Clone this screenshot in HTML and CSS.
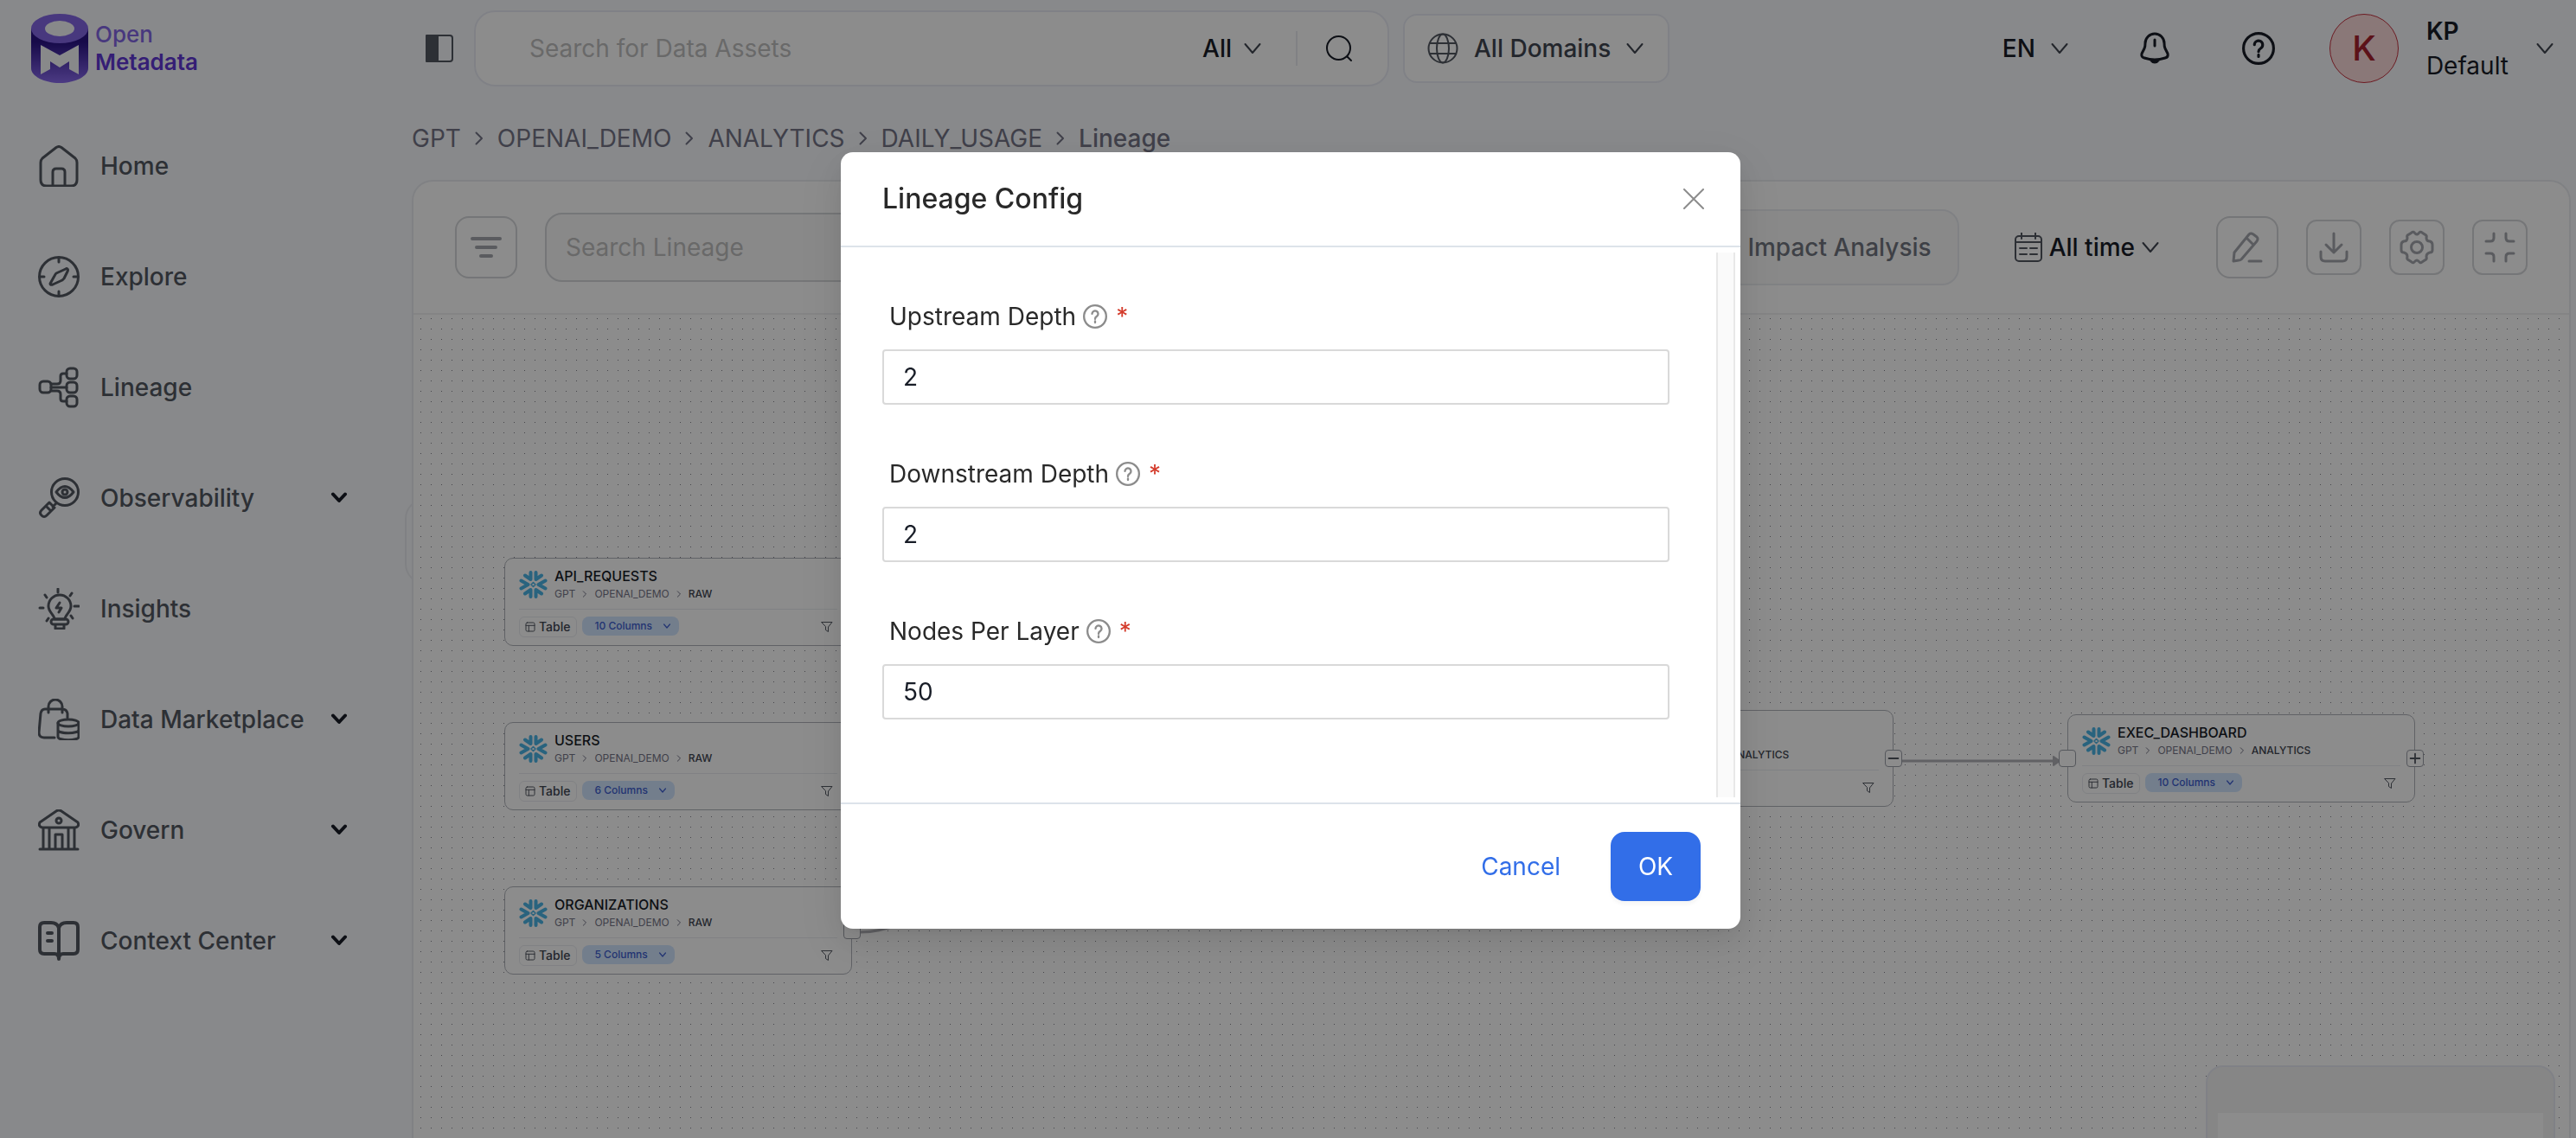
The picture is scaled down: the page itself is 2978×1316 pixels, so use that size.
FILE: index.html
```html
<!DOCTYPE html>
<html lang="en">
<head>
    <meta charset="UTF-8">
    <meta name="viewport" content="width=device-width, initial-scale=1.0">
    <title>Lineage - OpenMetadata</title>
    <link rel="stylesheet" href="styles.css">
</head>
<body>
    <!-- Shared icons -->
    <svg class="sprite" aria-hidden="true">
        <symbol id="chevron" viewBox="0 0 20 20"><path d="M1.500 5l8.500 10 8.500-10"/></symbol>
        <symbol id="chevron-bold" viewBox="0 0 20 14"><path d="M3 2.500l7 7.500L17 2.500"/></symbol>
        <symbol id="chevron-right" viewBox="0 0 10 16"><path d="M1.500 1.500L8 8l-6.500 6.500"/></symbol>
        <symbol id="question" viewBox="0 0 36 36"><circle cx="18" cy="18" r="16.500"/><path d="M13.500 14a4.500 4.500 0 1 1 7 3.800c-1.500 1-2.500 1.800-2.500 3.700M18 25v2"/></symbol>
        <symbol id="snowflake" viewBox="0 0 32 32">
            <path d="M13 2v8L6.500 5.500M19 2v8l6.500-4.500M13 30v-8l-6.500 4.500M19 30v-8l6.500 4.500M2 11.500l8 4.500-8 4.500M30 11.500L22 16l8 4.500"/>
            <path d="M16 13.500l2.500 2.500-2.500 2.500-2.500-2.500z" stroke-width="1.500"/>
        </symbol>
        <symbol id="table" viewBox="0 0 12 12"><rect x="1" y="1" width="10" height="10" rx="1.500"/><path d="M1 4.300h10M4.300 4.300V11"/></symbol>
        <symbol id="funnel" viewBox="0 0 14 14"><path d="M1 1.500h12L8.500 7v5.500l-3-2V7z"/></symbol>
    </svg>

    <div class="app">
        <!-- Sidebar -->
        <aside class="sidebar">
            <a class="logo" href="#">
                <svg width="66" height="80" viewBox="0 0 66 80">
                    <defs>
                        <linearGradient id="drum" x1="0" y1="0" x2="0" y2="1">
                            <stop offset="0.250" stop-color="#2a1386"/>
                            <stop offset="1" stop-color="#8b6bf0"/>
                        </linearGradient>
                    </defs>
                    <path d="M0 17v46c0 9 15 17 33 17s33-8 33-17V17z" fill="url(#drum)"/>
                    <ellipse cx="33" cy="17" rx="33" ry="17" fill="#8467e6"/>
                    <ellipse cx="33" cy="17" rx="17" ry="9" fill="#f8fafc"/>
                    <path d="M11 36l22 12 22-12v34l-11-6V55l-11 7-11-7v9l-11 6z" fill="#f8fafc"/>
                </svg>
                <span class="logo-text"><span>Open</span><strong>Metadata</strong></span>
            </a>
            <nav class="menu">
                <a href="#">
                    <svg viewBox="0 0 48 48"><path d="M3 20q0-3 2-5L21 2.500q3-2 6 0L43 15q2 2 2 5v20q0 7-7 7H10q-7 0-7-7zM17 47V31q0-4 4-4h6q4 0 4 4v16"/></svg>
                    <span>Home</span>
                </a>
                <a href="#">
                    <svg viewBox="0 0 48 48"><circle cx="24" cy="24" r="22.500"/><path d="M24 2v5M24 41v5M2 24h5M41 24h5M34 15q1 1 0 3l-4 8q-1 1-2 2l-11 5q-3 1-3-1l5-9q1-2 2-3l11-5q1-1 2 0z"/></svg>
                    <span>Explore</span>
                </a>
                <a href="#">
                    <svg viewBox="0 0 48 48"><rect x="2" y="17" width="13" height="13" rx="4"/><rect x="33" y="2" width="12" height="12" rx="4"/><rect x="33" y="18" width="12" height="12" rx="4"/><rect x="33" y="34" width="12" height="12" rx="4"/><path d="M15 20h7q4 0 4-4v-5q0-3 3-3h4M15 24h18M15 28h7q4 0 4 4v5q0 3 3 3h4"/></svg>
                    <span>Lineage</span>
                </a>
                <a href="#">
                    <svg viewBox="0 0 48 48"><circle cx="31" cy="17" r="15.500"/><path d="M21 17q10-13 20 0-10 13-20 0z"/><circle cx="31" cy="17" r="3"/><path d="M21 30l-4 4M13 29l6 6-9 9q-3 3-6 0t0-6zM9 33l6 6"/></svg>
                    <span>Observability</span>
                    <svg class="caret"><use href="#chevron-bold"/></svg>
                </a>
                <a href="#">
                    <svg viewBox="0 0 48 48"><path d="M19 36c0-5-7-8-7-15a13 13 0 0 1 26 0c0 7-7 10-7 15zM25 17l-4 6h6l-3 5"/><rect x="15" y="36" width="20" height="6" rx="3"/><path d="M20 43v4h10v-4M23 1v4M8 8l2 3M39 6l-2 3M2 23h4M42 21h5M10 38l2-3M40 35l-2-3"/></svg>
                    <span>Insights</span>
                </a>
                <a href="#">
                    <svg viewBox="0 0 48 48"><path d="M19 45H7q-6 0-6-6l2-22q1-5 5-5h20q5 0 6 5v5M12 16V9a8 8 0 0 1 16 0v7"/><ellipse cx="35" cy="28" rx="12" ry="4"/><path d="M23 28v16c0 5 24 5 24 0V28M23 36c0 5 24 5 24 0"/></svg>
                    <span>Data Marketplace</span>
                    <svg class="caret"><use href="#chevron-bold"/></svg>
                </a>
                <a href="#">
                    <svg viewBox="0 0 48 48"><path d="M5 21q-5-1-3-6L21 2q3-2 6 0l19 13q2 5-3 6zM2 46h44M6 21v25M13 21v25M35 21v25M42 21v25M20 46V29h8v17"/><ellipse cx="24" cy="13" rx="3" ry="3"/></svg>
                    <span>Govern</span>
                    <svg class="caret"><use href="#chevron-bold"/></svg>
                </a>
                <a href="#">
                    <svg class="heavy" viewBox="0 0 48 48"><path d="M24 45V9q-2-6-9-6H7Q2 3 2 8v26q0 5 5 5h12q5 0 5 6 0-6 5-6h12q5 0 5-5V8q0-5-5-5h-8q-7 0-9 6M11 15h5M11 24h5"/></svg>
                    <span>Context Center</span>
                    <svg class="caret"><use href="#chevron-bold"/></svg>
                </a>
            </nav>
        </aside>

        <div class="content">
            <!-- Top bar -->
            <header class="topbar">
                <button class="plain toggle" type="button" aria-label="Collapse sidebar">
                    <svg width="32" height="32" viewBox="0 0 32 32"><rect x="1" y="1" width="30" height="30" rx="3"/><path d="M1 1h13v30H1z" fill="#535862"/></svg>
                </button>
                <div class="search">
                    <input type="text" placeholder="Search for Data Assets" aria-label="Search for Data Assets">
                    <button class="plain" type="button">All <svg class="arrow"><use href="#chevron"/></svg></button>
                    <button class="plain find" type="button" aria-label="Search">
                        <svg width="32" height="32" viewBox="0 0 32 32"><circle cx="15.500" cy="15.500" r="13.500"/><path d="M25.500 25.500L30 30"/></svg>
                    </button>
                </div>
                <button class="domains" type="button">
                    <svg width="36" height="36" viewBox="0 0 36 36"><circle cx="18" cy="18" r="16.500"/><ellipse cx="18" cy="18" rx="7" ry="16.500"/><path d="M3 12h30M3 24h30"/></svg>
                    All Domains
                    <svg class="arrow"><use href="#chevron"/></svg>
                </button>
                <div class="tools">
                    <button class="plain" type="button">EN <svg class="arrow"><use href="#chevron"/></svg></button>
                    <button class="plain" type="button" aria-label="Notifications">
                        <svg class="dark" width="40" height="40" viewBox="0 0 40 40"><path d="M8 31q-4-1-3-5l3-6q1-2 1-6a11 11 0 0 1 22 0q0 4 1 6l3 6q1 4-3 5-12 4-24 0zM20 10v7M15 33q5 6 10 0"/></svg>
                    </button>
                    <button class="plain" type="button" aria-label="Help">
                        <svg class="dark" width="40" height="40" viewBox="0 0 40 40"><use href="#question" x="1" y="1" width="38" height="38"/></svg>
                    </button>
                    <button class="plain user" type="button">
                        <span class="avatar">K</span>
                        <span class="user-name"><strong>KP</strong>Default</span>
                        <svg class="arrow"><use href="#chevron"/></svg>
                    </button>
                </div>
            </header>

            <nav class="breadcrumb">
                <a href="#">GPT</a>
                <svg><use href="#chevron-right"/></svg>
                <a href="#">OPENAI_DEMO</a>
                <svg><use href="#chevron-right"/></svg>
                <a href="#">ANALYTICS</a>
                <svg><use href="#chevron-right"/></svg>
                <a href="#">DAILY_USAGE</a>
                <svg><use href="#chevron-right"/></svg>
                <span>Lineage</span>
            </nav>

            <main class="lineage">
                <div class="card">
                    <div class="toolbar">
                        <button class="tool large" type="button" aria-label="Filters">
                            <svg width="36" height="28" viewBox="0 0 36 28"><path d="M2 4h32M7 14h22M12 24h12" stroke-width="4"/></svg>
                        </button>
                        <input class="lineage-search" type="text" placeholder="Search Lineage" aria-label="Search Lineage">
                        <div class="tabs">
                            <button class="active" type="button">Lineage</button>
                            <button type="button">Impact Analysis</button>
                        </div>
                        <button class="plain date" type="button">
                            <svg width="32" height="34" viewBox="0 0 32 34"><rect x="1" y="4" width="30" height="29" rx="4"/><path d="M1 11h30M8 0v7M24 0v7M6 18h8M18 18h8M6 25h8M18 25h8"/></svg>
                            All time
                            <svg class="arrow"><use href="#chevron"/></svg>
                        </button>
                        <div class="actions">
                            <button class="tool large" type="button" aria-label="Edit">
                                <svg width="36" height="36" viewBox="0 0 36 36"><path d="M2 34l1-10L20 3q2-2 5 0l4 3q2 2 0 5L11 32q-1 1-3 1zM17 7l8 8"/><path d="M20 34h14"/></svg>
                            </button>
                            <button class="tool" type="button" aria-label="Export">
                                <svg width="36" height="36" viewBox="0 0 36 36"><path d="M18 2v22M9 15l9 9 9-9M3 23v6q0 5 5 5h20q5 0 5-5v-6"/></svg>
                            </button>
                            <button class="tool" type="button" aria-label="Settings">
                                <svg width="40" height="40" viewBox="0 0 40 40"><circle cx="20" cy="20" r="6.500"/><path d="M14 3q2-2 4 1 2 2 4 0 2-3 4-1l3 2q3 1 2 4 0 4 4 4 3 1 3 4v6q0 3-3 3-4 1-4 5 1 3-2 4l-3 2q-2 2-4-1-2-2-4 0-2 3-4 1l-3-2q-3-1-2-4 0-4-4-5-3 0-3-3v-6q0-3 3-4 4 0 4-4-1-3 2-4z"/></svg>
                            </button>
                            <button class="tool" type="button" aria-label="Exit full screen">
                                <svg width="36" height="36" viewBox="0 0 36 36"><path d="M11 2v5q0 4-4 4H2M25 2v5q0 4 4 4h5M11 34v-5q0-4-4-4H2M25 34v-5q0-4 4-4h5"/></svg>
                            </button>
                        </div>
                    </div>

                    <!-- Lineage canvas -->
                    <div class="canvas">
                        <svg class="flow">
                            <defs>
                                <pattern id="dots" x="8" y="4" width="12" height="12" patternUnits="userSpaceOnUse"><rect width="1" height="1" fill="#81818a"/></pattern>
                            </defs>
                            <rect width="100%" height="100%" fill="url(#dots)"/>
                            <path class="edge" d="M516 714C640 714 700 516 860 516M516 524H860M516 334C640 334 700 516 860 516"/>
                            <path class="edge" d="M1721 516H1898"/>
                            <path class="arrow-head" d="M1896 511l7 5-7 5z"/>
                        </svg>

                        <article class="node api">
                            <header>
                                <svg class="brand"><use href="#snowflake"/></svg>
                                <div><h3>API_REQUESTS</h3><p>GPT <svg><use href="#chevron-right"/></svg> OPENAI_DEMO <svg><use href="#chevron-right"/></svg> <b>RAW</b></p></div>
                            </header>
                            <footer>
                                <span class="type"><svg><use href="#table"/></svg>Table</span>
                                <button class="columns" type="button">10 Columns <svg><use href="#chevron"/></svg></button>
                                <svg class="funnel"><use href="#funnel"/></svg>
                            </footer>
                            <i class="handle right"></i>
                        </article>

                        <article class="node users">
                            <header>
                                <svg class="brand"><use href="#snowflake"/></svg>
                                <div><h3>USERS</h3><p>GPT <svg><use href="#chevron-right"/></svg> OPENAI_DEMO <svg><use href="#chevron-right"/></svg> <b>RAW</b></p></div>
                            </header>
                            <footer>
                                <span class="type"><svg><use href="#table"/></svg>Table</span>
                                <button class="columns" type="button">6 Columns <svg><use href="#chevron"/></svg></button>
                                <svg class="funnel"><use href="#funnel"/></svg>
                            </footer>
                            <i class="handle right"></i>
                        </article>

                        <article class="node orgs">
                            <header>
                                <svg class="brand"><use href="#snowflake"/></svg>
                                <div><h3>ORGANIZATIONS</h3><p>GPT <svg><use href="#chevron-right"/></svg> OPENAI_DEMO <svg><use href="#chevron-right"/></svg> <b>RAW</b></p></div>
                            </header>
                            <footer>
                                <span class="type"><svg><use href="#table"/></svg>Table</span>
                                <button class="columns" type="button">5 Columns <svg><use href="#chevron"/></svg></button>
                                <svg class="funnel"><use href="#funnel"/></svg>
                            </footer>
                            <i class="handle right"></i>
                        </article>

                        <article class="node usage">
                            <header>
                                <svg class="brand"><use href="#snowflake"/></svg>
                                <div><h3>DAILY_USAGE</h3><p>GPT <svg><use href="#chevron-right"/></svg> OPENAI_DEMO <svg><use href="#chevron-right"/></svg> <b>ANALYTICS</b></p></div>
                            </header>
                            <footer>
                                <span class="type"><svg><use href="#table"/></svg>Table</span>
                                <svg class="funnel"><use href="#funnel"/></svg>
                            </footer>
                            <i class="handle right"><svg viewBox="0 0 20 20"><path d="M4 10h12"/></svg></i>
                        </article>

                        <article class="node exec">
                            <header>
                                <svg class="brand"><use href="#snowflake"/></svg>
                                <div><h3>EXEC_DASHBOARD</h3><p>GPT <svg><use href="#chevron-right"/></svg> OPENAI_DEMO <svg><use href="#chevron-right"/></svg> <b>ANALYTICS</b></p></div>
                            </header>
                            <footer>
                                <span class="type"><svg><use href="#table"/></svg>Table</span>
                                <button class="columns" type="button">10 Columns <svg><use href="#chevron"/></svg></button>
                                <svg class="funnel"><use href="#funnel"/></svg>
                            </footer>
                            <i class="handle left"></i>
                            <i class="handle right"><svg viewBox="0 0 20 20"><path d="M4 10h12M10 4v12"/></svg></i>
                        </article>

                        <div class="minimap"><div></div></div>
                    </div>
                </div>
            </main>
        </div>
    </div>

    <!-- Lineage config dialog -->
    <div class="overlay">
        <form class="modal" role="dialog" aria-labelledby="modalTitle">
            <div class="modal-header">
                <h2 id="modalTitle">Lineage Config</h2>
                <button class="plain" type="button" aria-label="Close">
                    <svg width="24" height="24" viewBox="0 0 24 24"><path d="M1 1l22 22M23 1L1 23"/></svg>
                </button>
            </div>
            <div class="modal-body">
                <div class="fields">
                    <div class="field">
                        <label for="upstream">Upstream Depth <svg><use href="#question"/></svg><em>*</em></label>
                        <input type="text" id="upstream" name="upstream" value="2" required>
                    </div>
                    <div class="field">
                        <label for="downstream">Downstream Depth <svg><use href="#question"/></svg><em>*</em></label>
                        <input type="text" id="downstream" name="downstream" value="2" required>
                    </div>
                    <div class="field">
                        <label for="nodes">Nodes Per Layer <svg><use href="#question"/></svg><em>*</em></label>
                        <input type="text" id="nodes" name="nodes" value="50" required>
                    </div>
                </div>
                <div class="scroll-track"></div>
            </div>
            <div class="modal-footer">
                <button class="cancel" type="button">Cancel</button>
                <button class="ok" type="submit">OK</button>
            </div>
        </form>
    </div>
</body>
</html>
```

FILE: styles.css
```css
/* General Reset */
* {
    margin: 0;
    padding: 0;
    box-sizing: border-box;
}

body {
    font-family: Inter, 'Liberation Sans', sans-serif;
    font-size: 28px;
    line-height: 40px;
    background: #f8fafd;
    color: #181d27;
}

a {
    color: inherit;
    text-decoration: none;
}

button, input {
    font: inherit;
    color: inherit;
}

button {
    cursor: pointer;
}

svg {
    display: block;
    flex-shrink: 0;
    fill: none;
    stroke: #535862;
    stroke-width: 2;
    stroke-linecap: round;
    stroke-linejoin: round;
}

.sprite {
    position: absolute;
    width: 0;
    height: 0;
}

.plain {
    display: flex;
    align-items: center;
    background: none;
    border: none;
}

.arrow {
    width: 20px;
    height: 20px;
    stroke: #414651;
}

/* Page */
.app {
    display: grid;
    grid-template-columns: 476px 1fr;
    height: 100vh;
    overflow: hidden;
}

/* Sidebar */
.logo {
    display: flex;
    align-items: center;
    gap: 8px;
    height: 112px;
    padding-left: 36px;
}

.logo svg {
    stroke: none;
}

.logo-text {
    display: flex;
    flex-direction: column;
    font-size: 26px;
    font-weight: 500;
    line-height: 32px;
    color: #8467e6;
}

.logo-text strong {
    font-weight: 600;
    color: #6138d6;
}

.menu {
    display: flex;
    flex-direction: column;
    gap: 48px;
    padding: 40px 74px 0 44px;
}

.menu a {
    display: flex;
    align-items: center;
    gap: 24px;
    height: 80px;
    font-weight: 500;
    color: #535862;
}

.menu svg {
    width: 48px;
    height: 48px;
    stroke-width: 3;
}

.menu .heavy {
    stroke-width: 4;
}

.menu .caret {
    width: 20px;
    height: 14px;
    margin-left: auto;
    stroke: #181d27;
    stroke-width: 4;
}

/* Top bar */
.content {
    display: flex;
    flex-direction: column;
    min-width: 0;
}

.topbar {
    display: flex;
    align-items: center;
    height: 112px;
    padding: 0 26px 0 16px;
    font-weight: 500;
}

.toggle {
    margin-right: 24px;
}

.search {
    display: flex;
    align-items: center;
    width: 1058px;
    height: 88px;
    padding: 0 40px 0 62px;
    background: #fff;
    border: 2px solid #eaecf5;
    border-radius: 24px;
}

.search input {
    flex: 1;
    min-width: 0;
    border: none;
    background: none;
    outline: none;
    font-weight: 400;
}

input::placeholder {
    color: #bfbfbf;
    opacity: 1;
}

.search .plain {
    gap: 14px;
}

.search .find {
    height: 40px;
    margin-left: 40px;
    padding-left: 32px;
    border-left: 2px solid #eaecf0;
}

.find svg {
    stroke: #181d27;
}

.domains {
    display: flex;
    align-items: center;
    gap: 18px;
    height: 80px;
    margin-left: 16px;
    padding: 0 28px 0 26px;
    background: #fff;
    border: 2px solid #eaecf5;
    border-radius: 16px;
    font-weight: 500;
    color: #414651;
}

.tools {
    display: flex;
    align-items: center;
    gap: 80px;
    margin-left: auto;
}

.tools .plain {
    gap: 18px;
}

.tools .dark {
    stroke: #181d27;
    stroke-width: 3;
}

.tools .user {
    gap: 32px;
    margin-left: -18px;
    text-align: left;
}

.avatar {
    display: flex;
    align-items: center;
    justify-content: center;
    width: 80px;
    height: 80px;
    background: #fbdada;
    border: 1px solid #c6303e;
    border-radius: 50%;
    font-size: 40px;
    font-weight: 500;
    color: #a8222e;
}

.user-name {
    display: flex;
    flex-direction: column;
    font-weight: 400;
}

.user-name strong {
    font-weight: 600;
}

/* Breadcrumb */
.breadcrumb {
    display: flex;
    align-items: center;
    gap: 16px;
    height: 96px;
    color: #757587;
}

.breadcrumb svg {
    width: 10px;
    height: 16px;
    stroke: #757587;
}

.breadcrumb span {
    font-weight: 500;
}

/* Lineage card */
.lineage {
    position: relative;
    flex: 1;
    padding-right: 6px;
}

/* handle of the collapsed panel, tucked under the card */
.lineage::before {
    content: "";
    position: absolute;
    top: 368px;
    left: -8px;
    width: 60px;
    height: 96px;
    border: 2px solid #eaecf0;
    border-radius: 24px;
}

.card {
    position: relative;
    display: flex;
    flex-direction: column;
    height: 100%;
    background: #fff;
    border: 2px solid #eaecf0;
    border-bottom: none;
    border-radius: 24px 24px 0 0;
    overflow: hidden;
}

.toolbar {
    display: flex;
    align-items: center;
    height: 154px;
    padding: 0 48px;
    border-bottom: 2px solid #f0f1f3;
}

.tool {
    display: flex;
    align-items: center;
    justify-content: center;
    width: 64px;
    height: 64px;
    background: #fff;
    border: 2px solid #d5d7da;
    border-radius: 12px;
}

.tool.large {
    width: 72px;
    height: 72px;
    border-radius: 16px;
}

.tool svg {
    stroke: #a4a7ae;
    stroke-width: 3;
}

.lineage-search {
    width: 640px;
    height: 80px;
    margin-left: 32px;
    padding: 0 22px;
    background: #fafafa;
    border: 2px solid #d5d7da;
    border-radius: 20px;
}

.tabs {
    display: flex;
    height: 88px;
    margin-left: auto;
    background: #fafafa;
    border: 2px solid #eaecf0;
    border-radius: 20px;
}

.tabs button {
    padding: 0 30px;
    background: none;
    border: none;
    font-weight: 500;
    color: #717680;
}

.tabs .active {
    color: #2f6bea;
}

.date {
    gap: 8px;
    margin: 0 66px 0 64px;
    font-weight: 500;
}

.actions {
    display: flex;
    align-items: center;
    gap: 32px;
}

/* Canvas */
.canvas {
    position: relative;
    flex: 1;
    overflow: hidden;
}

.flow {
    width: 100%;
    height: 100%;
    stroke: none;
}

.edge {
    stroke: #b1b1b7;
    stroke-width: 3;
}

.arrow-head {
    fill: #b1b1b7;
    stroke: #b1b1b7;
}

.node {
    position: absolute;
    display: flex;
    flex-direction: column;
    width: 402px;
    padding: 9px 16px;
    background: #fff;
    border: 1px solid #b0b3ba;
    border-radius: 10px;
}

.node.api {
    top: 281px;
    left: 105px;
}

.node.users {
    top: 471px;
    left: 105px;
}

.node.orgs {
    top: 661px;
    left: 105px;
}

.node.usage {
    top: 457px;
    left: 1309px;
    padding-top: 19px;
}

.node.exec {
    top: 462px;
    left: 1912px;
}

.node header {
    display: flex;
    align-items: center;
    gap: 8px;
    padding-bottom: 8px;
    border-bottom: 1px solid #eaecf0;
}

.brand {
    width: 33px;
    height: 32px;
    stroke: #4bb4e6;
    stroke-width: 4;
}

.node h3 {
    margin-bottom: 1px;
    font-size: 16px;
    font-weight: 500;
    line-height: 22px;
}

.node p {
    display: flex;
    align-items: center;
    gap: 8px;
    font-size: 12px;
    line-height: 18px;
    color: #757587;
}

.node p svg {
    width: 6px;
    height: 8px;
    stroke: #757587;
}

.node b {
    font-weight: 500;
    color: #414651;
}

.node footer {
    display: flex;
    align-items: center;
    padding-top: 8px;
}

.type {
    display: flex;
    align-items: center;
    gap: 4px;
    height: 24px;
    padding: 0 7px 0 6px;
    border: 1px solid #eaecf0;
    border-radius: 6px;
    font-size: 14px;
    font-weight: 500;
    line-height: 22px;
    color: #414651;
}

.type svg {
    width: 12px;
    height: 12px;
    stroke-width: 1;
}

.columns {
    display: flex;
    align-items: center;
    gap: 13px;
    height: 22px;
    margin: 0 0 2px 6px;
    padding: 0 10px 0 14px;
    background: #d1e5ff;
    border: none;
    border-radius: 8px;
    font-size: 12px;
    font-weight: 500;
    line-height: 22px;
    color: #3f5fd0;
}

.columns svg {
    width: 8px;
    height: 8px;
    stroke: #3f5fd0;
    stroke-width: 3;
}

.funnel {
    width: 14px;
    height: 14px;
    margin-left: auto;
    margin-right: 5px;
    stroke-width: 1;
}

.handle {
    position: absolute;
    top: calc(50% - 10px);
    width: 20px;
    height: 20px;
    background: #fff;
    border: 1px solid #9c9fa8;
    border-radius: 4px;
}

.handle svg {
    width: 100%;
    height: 100%;
}

.handle.left {
    left: -11px;
}

.handle.right {
    right: -11px;
}

.minimap {
    position: absolute;
    top: 868px;
    right: 16px;
    width: 404px;
    height: 280px;
    padding: 53px 12px;
    background: #f4f4f4;
    border: 2px solid #eaecf5;
    border-radius: 20px;
}

.minimap div {
    height: 100%;
    background: #fff;
}

/* Modal */
.overlay {
    position: fixed;
    inset: 0;
    display: flex;
    align-items: flex-start;
    justify-content: center;
    padding: 176px 0 0 6px;
    background: rgba(0, 0, 0, 0.45);
}

.modal {
    width: 1040px;
    background: #fff;
    border-radius: 14px;
    box-shadow: 0 6px 12px -8px rgba(0, 0, 0, 0.12), 0 12px 32px rgba(0, 0, 0, 0.08), 0 18px 56px 16px rgba(0, 0, 0, 0.05);
    color: #292929;
}

.modal-header {
    display: flex;
    align-items: center;
    justify-content: space-between;
    height: 110px;
    padding: 0 42px 0 48px;
    border-bottom: 2px solid #dde3ea;
}

.modal-header h2 {
    font-size: 32px;
    font-weight: 500;
}

.modal-header svg {
    stroke: #8c8c8c;
}

.modal-body {
    display: flex;
    gap: 54px;
    padding: 6px 6px 6px 48px;
}

.fields {
    display: flex;
    flex: 1;
    flex-direction: column;
    gap: 60px;
    padding: 54px 0 90px;
}

.field label {
    display: flex;
    align-items: center;
    gap: 8px;
    height: 40px;
    margin: 0 8px 18px;
}

.field label svg {
    width: 28px;
    height: 28px;
    stroke: #8c8c8c;
    stroke-width: 3;
}

.field em {
    margin-left: 2px;
    font-style: normal;
    color: #d43c2c;
}

.field input {
    display: block;
    width: 100%;
    height: 64px;
    padding: 0 22px;
    background: #fff;
    border: 2px solid #d9d9d9;
    border-radius: 4px;
    color: #181d27;
}

.scroll-track {
    width: 22px;
    background: #fafafa;
    border: solid #e8e8e8;
    border-width: 0 2px;
}

.modal-footer {
    display: flex;
    align-items: center;
    justify-content: flex-end;
    gap: 58px;
    height: 146px;
    padding: 0 46px;
    border-top: 2px solid #dde3ea;
}

.cancel {
    background: none;
    border: none;
    color: #326ee8;
}

.ok {
    width: 104px;
    height: 80px;
    background: #326ee8;
    border: none;
    border-radius: 16px;
    box-shadow: 0 4px 4px rgba(0, 0, 0, 0.04);
    color: #fff;
}
```
